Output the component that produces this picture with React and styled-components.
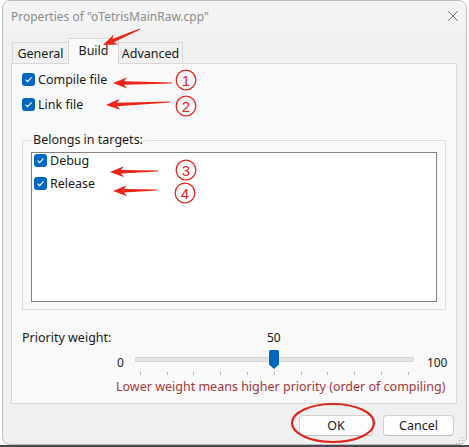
import React from "react";
import styled, { createGlobalStyle } from "styled-components";

const GlobalStyle = createGlobalStyle`
  html, body {
    margin: 0;
    padding: 0;
    background: #ffffff;
    font-family: "Noto Sans", "Liberation Sans", sans-serif;
  }
`;

const Page = styled.div`
  position: relative;
  width: 469px;
  height: 447px;
  overflow: hidden;
  background: #ffffff;
  border-bottom: 2px solid #4b4b4b;
  box-sizing: border-box;
  padding-left: 2px;
`;

const Window = styled.div`
  width: 465px;
  height: 445px;
  box-sizing: border-box;
  border: 1px solid #bcbcbc;
  border-radius: 8px;
  background: #f0f0f0;
  display: flex;
  flex-direction: column;
  overflow: hidden;
`;

const TitleBar = styled.div`
  height: 30px;
  flex: none;
  background: #f3f3f3;
  display: flex;
  align-items: center;
  justify-content: space-between;
  padding: 0 7px 0 8px;
`;

const Title = styled.span`
  font-size: 12px;
  color: #8c8c8c;
`;

const Body = styled.div`
  flex: 1;
  display: flex;
  flex-direction: column;
  padding: 8px 9px 0 8px;
`;

const TabRow = styled.div`
  display: flex;
  align-items: flex-end;
  height: 25px;
  padding-left: 1px;
  margin-bottom: -1px;
  position: relative;
  z-index: 1;
`;

const Tab = styled.div`
  box-sizing: border-box;
  height: ${(p) => (p.$active ? 26 : 22)}px;
  width: ${(p) => p.$w}px;
  border: 1px solid #d9d9d9;
  border-bottom: ${(p) => (p.$active ? "none" : "1px solid #d9d9d9")};
  margin-left: ${(p) => (p.$active ? -1 : 0)}px;
  margin-right: ${(p) => (p.$active ? -1 : 0)}px;
  background: ${(p) => (p.$active ? "#f9f9f9" : "#f0f0f0")};
  font-size: 12.5px;
  color: #1a1a1a;
  display: flex;
  align-items: center;
  justify-content: center;
  padding-bottom: ${(p) => (p.$active ? 3 : 0)}px;
`;

const Panel = styled.div`
  box-sizing: border-box;
  height: 341px;
  border: 1px solid #dadada;
  background: #f9f9f9;
  padding: 9px 10px 0 10px;
  display: flex;
  flex-direction: column;
`;

const CheckList = styled.div`
  display: flex;
  flex-direction: column;
  gap: ${(p) => p.$gap}px;
`;

const CheckRow = styled.label`
  display: flex;
  align-items: center;
  gap: 3px;
  height: 13px;
  font-size: 12.5px;
  color: #1a1a1a;
  white-space: nowrap;
`;

const Box = styled.span`
  width: 13px;
  height: 13px;
  border-radius: 3px;
  background: #0067c0;
  display: flex;
  align-items: center;
  justify-content: center;
  flex: none;
`;

const Group = styled.fieldset`
  margin: 21px 0 0 0;
  padding: 4px 8px 7px 8px;
  border: 1px solid #dcdcdc;
  min-width: 0;
`;

const Legend = styled.legend`
  padding: 0 2px;
  font-size: 12.5px;
  line-height: 16px;
  color: #1a1a1a;
`;

const ListBox = styled.div`
  box-sizing: border-box;
  height: 150px;
  border: 1px solid #828282;
  background: #ffffff;
  padding: 1px 2px;
`;

const FieldLabel = styled.div`
  margin-top: 20px;
  font-size: 12.5px;
  line-height: 16px;
  color: #1a1a1a;
`;

const SliderRow = styled.div`
  display: flex;
  align-items: flex-start;
  padding-left: 95px;
  margin-top: 4px;
  height: 26px;
`;

const EndLabel = styled.span`
  font-size: 12px;
  line-height: 16px;
  margin-top: 5px;
  color: #1a1a1a;
  margin-left: ${(p) => p.$ml || 0}px;
  margin-right: ${(p) => p.$mr || 0}px;
`;

const Track = styled.div`
  position: relative;
  width: 279px;
  height: 26px;
  flex: none;
`;

const Rail = styled.div`
  position: absolute;
  left: 0;
  right: 0;
  top: 7px;
  height: 3px;
  background: #e3e3e3;
  border: 1px solid #d6d6d6;
  border-radius: 1px;
`;

const Tick = styled.span`
  position: absolute;
  top: 22px;
  width: 1px;
  height: 3px;
  background: #b5b5b5;
`;

const Thumb = styled.svg`
  position: absolute;
  top: 0;
`;

const ValueLabel = styled.span`
  position: absolute;
  top: -20px;
  width: 30px;
  text-align: center;
  font-size: 12px;
  line-height: 16px;
  color: #1a1a1a;
`;

const Hint = styled.div`
  margin-top: 3px;
  padding-left: 94px;
  font-size: 12.5px;
  line-height: 16px;
  color: #a3383a;
  white-space: nowrap;
`;

const ButtonRow = styled.div`
  display: flex;
  justify-content: flex-end;
  gap: 10px;
  padding: 11px 3px 0 0;
`;

const Button = styled.button`
  box-sizing: border-box;
  width: ${(p) => p.$w}px;
  height: 21px;
  border: 1px solid #d0d0d0;
  border-bottom-color: #bdbdbd;
  border-radius: 4px;
  background: #fdfdfd;
  font-family: inherit;
  font-size: 12.5px;
  color: #1a1a1a;
  padding: 0;
`;

const Overlay = styled.svg`
  position: absolute;
  left: 0;
  top: 0;
  z-index: 10;
  pointer-events: none;
`;

const Check = () => (
  <svg width="9" height="9" viewBox="0 0 9 9">
    <path d="M1.6 4.7 L3.6 6.6 L7.6 2.4" fill="none" stroke="#fff" strokeWidth="1.1" />
  </svg>
);

const CheckItem = ({ children }) => (
  <CheckRow>
    <Box>
      <Check />
    </Box>
    {children}
  </CheckRow>
);

const arrow = (x1, y1, x2, y2) => {
  const dx = x1 - x2;
  const dy = y1 - y2;
  const len = Math.hypot(dx, dy);
  const ux = dx / len;
  const uy = dy / len;
  const nx = -uy;
  const ny = ux;
  const p = (a, w) => `${x2 + ux * a + nx * w},${y2 + uy * a + ny * w}`;
  return [
    p(0, 0),
    p(14, 5.5),
    p(11, 1.8),
    `${x1 + nx * 0.5},${y1 + ny * 0.5}`,
    `${x1 - nx * 0.5},${y1 - ny * 0.5}`,
    p(11, -1.8),
    p(14, -5.5),
  ].join(" ");
};

const arrows = [
  [140, 29, 103, 45],
  [172, 83, 113, 83],
  [170, 102, 106, 105],
  [158, 171, 110, 172],
  [157, 190, 113, 191],
];

const marks = [
  ["1", 186, 80],
  ["2", 186, 106],
  ["3", 186, 170],
  ["4", 185, 193],
];

const ticks = Array.from({ length: 11 }, (_, i) => 5 + i * 26.8);
const value = 50;
const thumbX = 5 + (value / 100) * 268;

export default function App() {
  return (
    <Page>
      <GlobalStyle />
      <Window>
        <TitleBar>
          <Title>Properties of "oTetrisMainRaw.cpp"</Title>
          <svg width="12" height="12" viewBox="0 0 12 12">
            <path d="M1 1 L11 11 M11 1 L1 11" stroke="#7a7a7a" strokeWidth="1" />
          </svg>
        </TitleBar>
        <Body>
          <TabRow>
            <Tab $w={57}>General</Tab>
            <Tab $w={51} $active>
              Build
            </Tab>
            <Tab $w={65}>Advanced</Tab>
          </TabRow>
          <Panel>
            <CheckList $gap={12}>
              <CheckItem>Compile file</CheckItem>
              <CheckItem>Link file</CheckItem>
            </CheckList>
            <Group>
              <Legend>Belongs in targets:</Legend>
              <ListBox>
                <CheckList $gap={10}>
                  <CheckItem>Debug</CheckItem>
                  <CheckItem>Release</CheckItem>
                </CheckList>
              </ListBox>
            </Group>
            <FieldLabel>Priority weight:</FieldLabel>
            <SliderRow>
              <EndLabel $mr={11}>0</EndLabel>
              <Track>
                <Rail />
                {ticks.map((x) => (
                  <Tick key={x} style={{ left: x }} />
                ))}
                <ValueLabel style={{ left: thumbX - 15 }}>{value}</ValueLabel>
                <Thumb width="10" height="19" viewBox="0 0 10 19" style={{ left: thumbX - 5 }}>
                  <path d="M1.5 0 H8.5 A1.5 1.5 0 0 1 10 1.5 V14.5 L5 19 L0 14.5 V1.5 A1.5 1.5 0 0 1 1.5 0 Z" fill="#0067c0" />
                </Thumb>
              </Track>
              <EndLabel $ml={13}>100</EndLabel>
            </SliderRow>
            <Hint>Lower weight means higher priority (order of compiling)</Hint>
          </Panel>
          <ButtonRow>
            <Button $w={74}>OK</Button>
            <Button $w={71}>Cancel</Button>
          </ButtonRow>
        </Body>
      </Window>
      <Overlay width="469" height="447" viewBox="0 0 469 447">
        {arrows.map((a, i) => (
          <polygon key={i} points={arrow(...a)} fill="#ec2418" />
        ))}
        {marks.map(([t, x, y]) => (
          <g key={t}>
            <circle cx={x} cy={y} r="9.8" fill="none" stroke="#e5261c" strokeWidth="1.3" />
            <text
              x={x}
              y={y + 0.5}
              fill="#e5261c"
              fontSize="15"
              textAnchor="middle"
              dominantBaseline="central"
              fontFamily="'Liberation Sans', sans-serif"
            >
              {t}
            </text>
          </g>
        ))}
        <ellipse cx="333" cy="423" rx="41" ry="19" fill="none" stroke="#e0261e" strokeWidth="2.2" />
        <g fill="#a0a0a0">
          <rect x="462" y="437" width="1" height="1" />
          <rect x="459" y="440" width="1" height="1" />
          <rect x="462" y="440" width="1" height="1" />
          <rect x="456" y="443" width="1" height="1" />
          <rect x="459" y="443" width="1" height="1" />
          <rect x="462" y="443" width="1" height="1" />
        </g>
      </Overlay>
    </Page>
  );
}
